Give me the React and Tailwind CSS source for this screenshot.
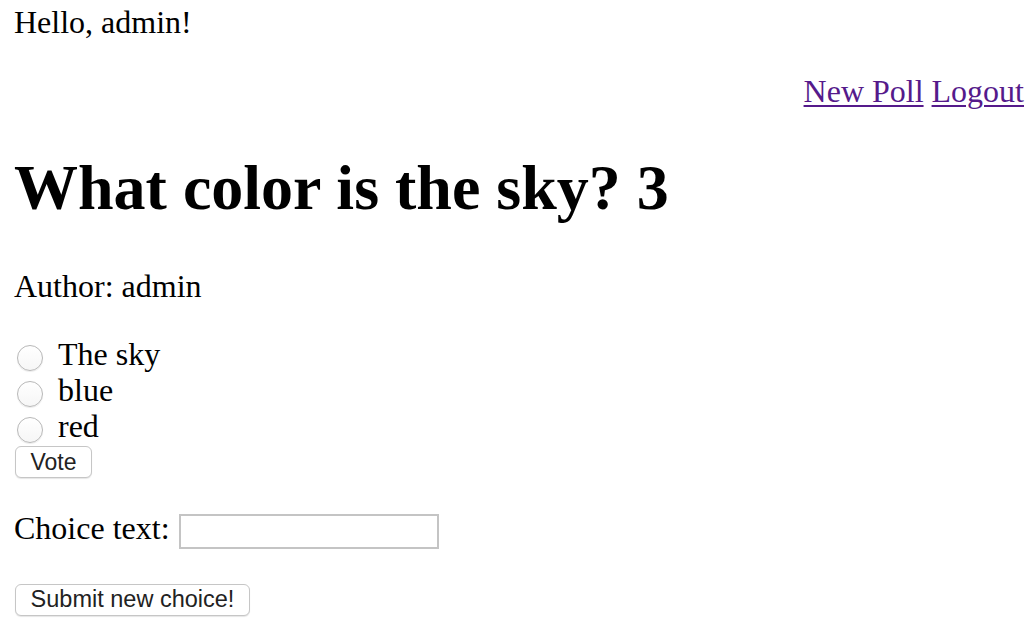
import React from "react";

function Radio({ label }) {
  return (
    <label className="flex h-[36px] items-start">
      <span className="ml-[3px] mt-[9px] mr-[15px] block h-[26px] w-[26px] rounded-full border border-[#b8b8b8] bg-gradient-to-b from-white to-[#f6f6f6] shadow-[0_1px_1px_rgba(0,0,0,0.08)]"></span>
      <span>{label}</span>
    </label>
  );
}

export default function App() {
  return (
    <div
      className="min-h-[642px] w-[1036px] bg-white pl-[14px] pr-[12px] text-[32px] leading-[36px] text-black"
      style={{ fontFamily: '"Liberation Serif", "Times New Roman", serif' }}
    >
      <div className="pt-[4px]">Hello, admin!</div>
      <div className="mt-[33px] text-right">
        <a href="#" className="text-[#551a8b] underline decoration-[2px] underline-offset-[3px]">
          New Poll
        </a>{" "}
        <a href="#" className="text-[#551a8b] underline decoration-[2px] underline-offset-[3px]">
          Logout
        </a>
      </div>
      <h1 className="mt-[42px] text-[64px] font-bold leading-[74px]">What color is the sky? 3</h1>
      <p className="mt-[43px]">Author: admin</p>
      <div className="mt-[32px]">
        <Radio label="The sky" />
        <Radio label="blue" />
        <Radio label="red" />
        <button
          className="mt-[2px] ml-[1px] flex h-[32px] w-[77px] items-center justify-center rounded-[6px] border border-[#c6c6c6] bg-white text-[23px] leading-none text-[#222] shadow-[0_1px_1px_rgba(0,0,0,0.1)]"
          style={{ fontFamily: '"Liberation Sans", Arial, sans-serif' }}
        >
          Vote
        </button>
      </div>
      <div className="mt-[32px] flex items-start">
        <span>Choice text:</span>
        <input
          type="text"
          className="ml-[9px] mt-[4px] h-[35px] w-[260px] border-2 border-[#c4c4c4] bg-white outline-none"
        />
      </div>
      <button
        className="mt-[35px] ml-[1px] flex h-[32px] w-[235px] items-center justify-center rounded-[6px] border border-[#c6c6c6] bg-white text-[23.5px] leading-none text-[#222] shadow-[0_1px_1px_rgba(0,0,0,0.1)]"
        style={{ fontFamily: '"Liberation Sans", Arial, sans-serif' }}
      >
        Submit new choice!
      </button>
    </div>
  );
}
